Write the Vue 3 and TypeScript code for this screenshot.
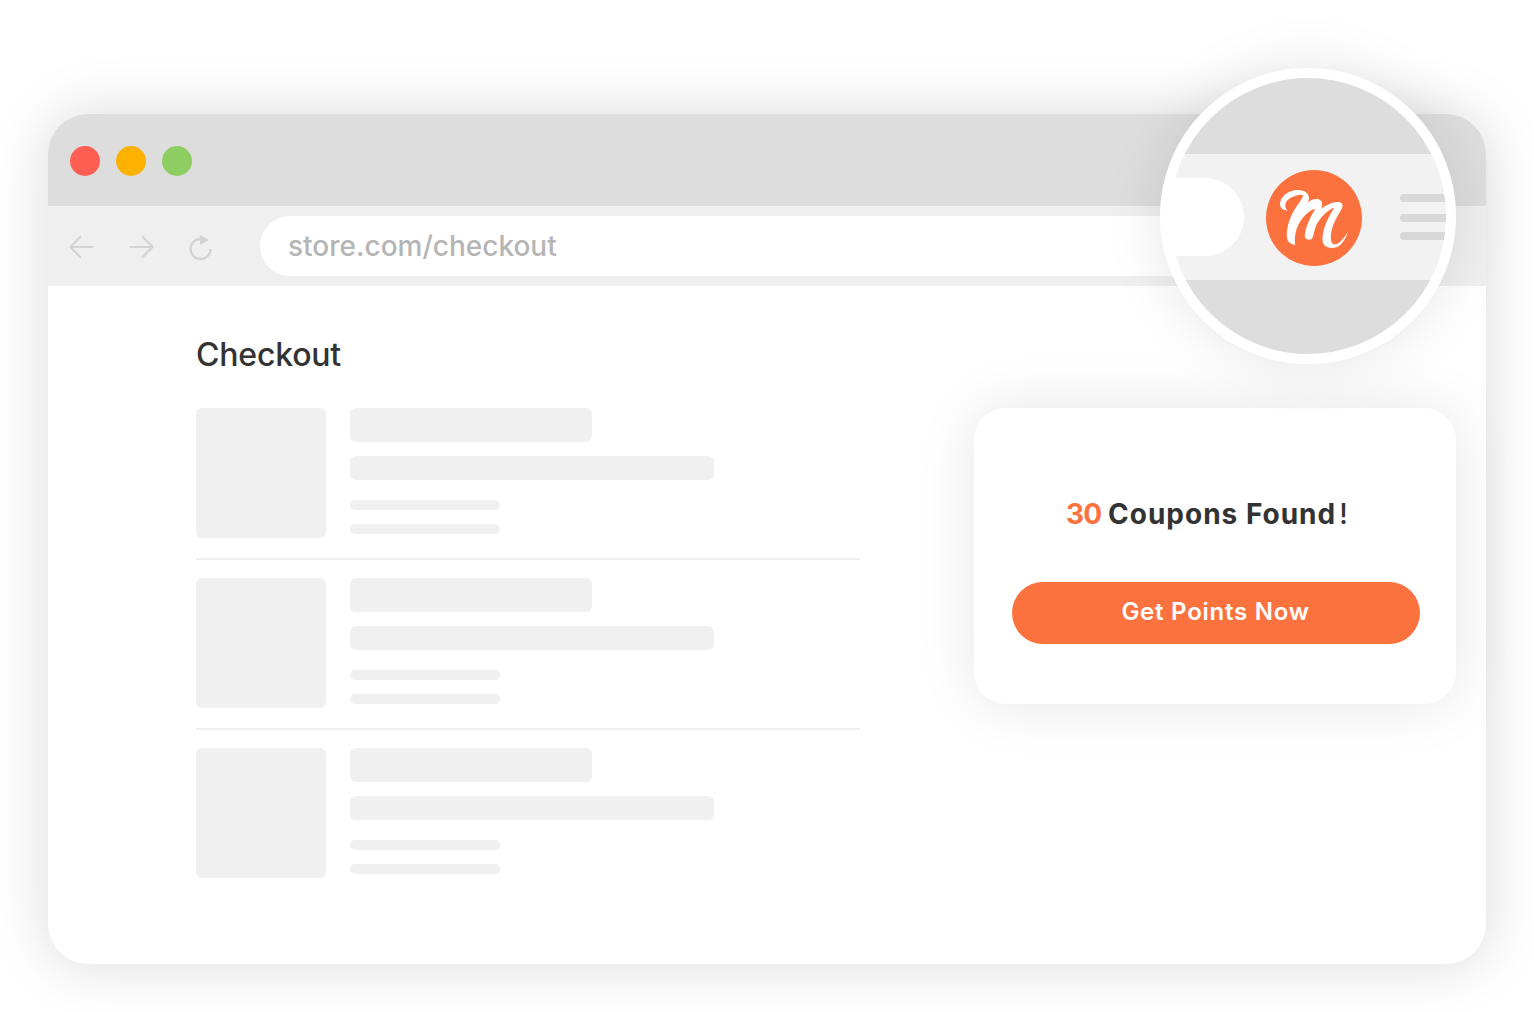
<script setup lang="ts">
const lights: string[] = ['red', 'amber', 'green']
const products: number[] = [1, 2, 3]
</script>

<template>
  <div class="page">
    <main class="window">
      <header class="titlebar">
        <span v-for="light in lights" :key="light" class="light" :class="light"></span>
      </header>
      <nav class="navbar">
        <svg class="nav-icon" width="26" height="26" viewBox="0 0 26 26">
          <path d="M24.5 13H2.6M12.4 2.7 2.4 13l10 10.2" />
        </svg>
        <svg class="nav-icon forward" width="26" height="26" viewBox="0 0 26 26">
          <path d="M2.5 13h21.9M14.6 2.7 24.6 13l-10 10.2" />
        </svg>
        <svg class="nav-icon reload" width="26" height="26" viewBox="0 0 26 26">
          <path class="arc" d="M12.5 6A10 10 0 1 0 22.6 16" />
          <path class="head" d="M12 2v9.7l9-4.8z" />
        </svg>
        <div class="address"><span class="url">store.com/checkout</span></div>
      </nav>
      <section class="content">
        <div class="cart">
          <h1>Checkout</h1>
          <article v-for="product in products" :key="product" class="product">
            <div class="thumb"></div>
            <div class="lines">
              <div class="line name"></div>
              <div class="line description"></div>
              <div class="line detail"></div>
              <div class="line detail last"></div>
            </div>
          </article>
        </div>
        <aside class="popup">
          <p class="found"><span class="count">30</span> <span class="label">Coupons Found</span><span class="bang">!</span></p>
          <button class="cta" type="button"><span>Get Points Now</span></button>
        </aside>
      </section>
    </main>

    <div class="lens">
      <div class="lens-bar">
        <div class="lens-address"></div>
        <svg class="logo" width="96" height="96" viewBox="18 18 288 288">
          <circle cx="162" cy="162" r="144" fill="#fc723e" />
          <path
            fill="#fff"
            d="M83 140C69 139 60 132 60 121C60 98 85 78 114 78C134 78 146 89 147 101C147 107 146 112 144 116C153 107 163 104 172 105C183 107 188 115 186 123L184 134C201 121 222 112 237 114C246 116 250 121 247 129C243 142 231 156 221 180C212 202 210 224 215 235C222 251 247 234 263 203C260 220 245 245 229 250C211 255 191 251 188 232C185 209 198 173 211 151L223 131C207 135 183 158 172 177C161 197 163 216 155 225C149 230 137 227 135 220C132 204 145 168 166 134C147 137 126 161 116 181C107 198 103 219 105 242C97 244 87 237 83 229C76 212 83 178 96 151C108 127 126 106 129 96C129 91 117 92 107 95C90 100 77 110 76 122C75 131 79 137 83 140Z"
          />
        </svg>
        <div class="menu"><i></i><i></i><i></i></div>
      </div>
    </div>
  </div>
</template>

<style>
body {
  margin: 0;
  background: #fff;
}
</style>

<style scoped>
.page {
  position: relative;
  box-sizing: border-box;
  width: 1534px;
  height: 1012px;
  padding: 114px 48px 48px;
  overflow: hidden;
  background: #fff;
  font-family: Inter, "Liberation Sans", sans-serif;
}
.window {
  height: 850px;
  border-radius: 40px;
  background: #fff;
  box-shadow: 0 0 60px rgba(0, 0, 0, 0.15);
}
.titlebar {
  display: flex;
  gap: 16px;
  box-sizing: border-box;
  height: 92px;
  padding: 32px 22px;
  border-radius: 40px 40px 0 0;
  background: #ddd;
}
.light {
  width: 30px;
  height: 30px;
  border-radius: 50%;
}
.red { background: #ff5f52; }
.amber { background: #fdb100; }
.green { background: #8dcd62; }
.navbar {
  display: flex;
  align-items: center;
  box-sizing: border-box;
  height: 80px;
  padding: 10px 20px;
  background: #efefef;
}
.nav-icon {
  flex: none;
  margin-top: 2px;
  overflow: visible;
  fill: none;
  stroke: #d3d3d3;
  stroke-width: 2.1;
  stroke-linecap: round;
  stroke-linejoin: round;
}
.forward { margin-left: 34px; }
.reload { margin: 0 0 0 34px; }
.arc { stroke-linecap: butt; stroke-width: 2.3; }
.head { fill: #d3d3d3; stroke: none; }
.address {
  display: flex;
  align-items: center;
  box-sizing: border-box;
  width: 1090px;
  height: 60px;
  margin-left: 46px;
  padding-left: 28px;
  border-radius: 30px;
  background: #fff;
}
.url {
  color: #b5b5b5;
  font-size: 28px;
  font-weight: 500;
  line-height: 36px;
  white-space: nowrap;
}
.content {
  display: flex;
  justify-content: space-between;
  padding: 0 30px 0 148px;
}
.cart {
  width: 664px;
}
h1 {
  height: 40px;
  margin: 49px 0 33px;
  color: #333;
  font-size: 32px;
  font-weight: 500;
  letter-spacing: -0.2px;
  line-height: 40px;
}
.product {
  display: flex;
  gap: 24px;
  height: 130px;
  padding-bottom: 20px;
  margin-bottom: 18px;
  border-bottom: 2px solid #f0f0f0;
}
.product:last-child {
  border-bottom: 0;
}
.thumb {
  width: 130px;
  height: 130px;
  border-radius: 6px;
  background: #f0f0f0;
}
.line {
  border-radius: 6px;
  background: #f0f0f0;
}
.name { width: 242px; height: 34px; }
.description { width: 364px; height: 24px; margin-top: 14px; }
.detail { width: 150px; height: 10px; margin-top: 20px; border-radius: 5px; }
.last { margin-top: 14px; }
.popup {
  box-sizing: border-box;
  width: 482px;
  height: 296px;
  margin-top: 122px;
  padding: 88px 36px 0 38px;
  border-radius: 32px;
  background: #fff;
  box-shadow: 0 0 60px rgba(0, 0, 0, 0.1);
}
.found {
  height: 36px;
  margin: 0 0 50px 54px;
  color: #333;
  font-size: 28px;
  font-weight: 650;
  line-height: 36px;
  white-space: nowrap;
}
.count { color: #fc723e; letter-spacing: -0.8px; }
.label { letter-spacing: 1px; }
.bang { margin-left: 3px; font-weight: 500; }
.cta {
  display: block;
  width: 408px;
  height: 62px;
  padding: 0 1px 3px 0;
  border: 0;
  border-radius: 31px;
  background: #fc723e;
  color: #fff;
  font-family: inherit;
  font-size: 24px;
  font-weight: 600;
  letter-spacing: 0.75px;
}
.lens {
  position: absolute;
  top: 68px;
  left: 1160px;
  display: flex;
  align-items: center;
  box-sizing: border-box;
  width: 296px;
  height: 296px;
  padding-top: 2px;
  border: 10px solid #fff;
  border-radius: 50%;
  overflow: hidden;
  background: linear-gradient(#ddd 76px, #fff 76px, #fff 202px, #ddd 202px);
  box-shadow: 0 0 60px rgba(0, 0, 0, 0.1);
}
.lens-bar {
  display: flex;
  flex: none;
  align-items: center;
  width: 276px;
  height: 126px;
  background: linear-gradient(#f2f2f2, #f2f2f2) 10px 0 no-repeat, linear-gradient(#f2f2f2 24px, #fff 24px, #fff 102px, #f2f2f2 102px);
}
.lens-address {
  flex: none;
  width: 74px;
  height: 78px;
  border-radius: 0 39px 39px 0;
  background: #fff;
}
.logo {
  flex: none;
  margin: 2px 0 0 22px;
}
.menu {
  display: flex;
  flex-direction: column;
  flex: none;
  width: 60px;
  margin-left: 38px;
}
.menu i {
  height: 8px;
  border-radius: 4px;
  background: #d8d8d8;
}
.menu i + i { margin-top: 12px; }
.menu i + i + i { margin-top: 10px; }
</style>
